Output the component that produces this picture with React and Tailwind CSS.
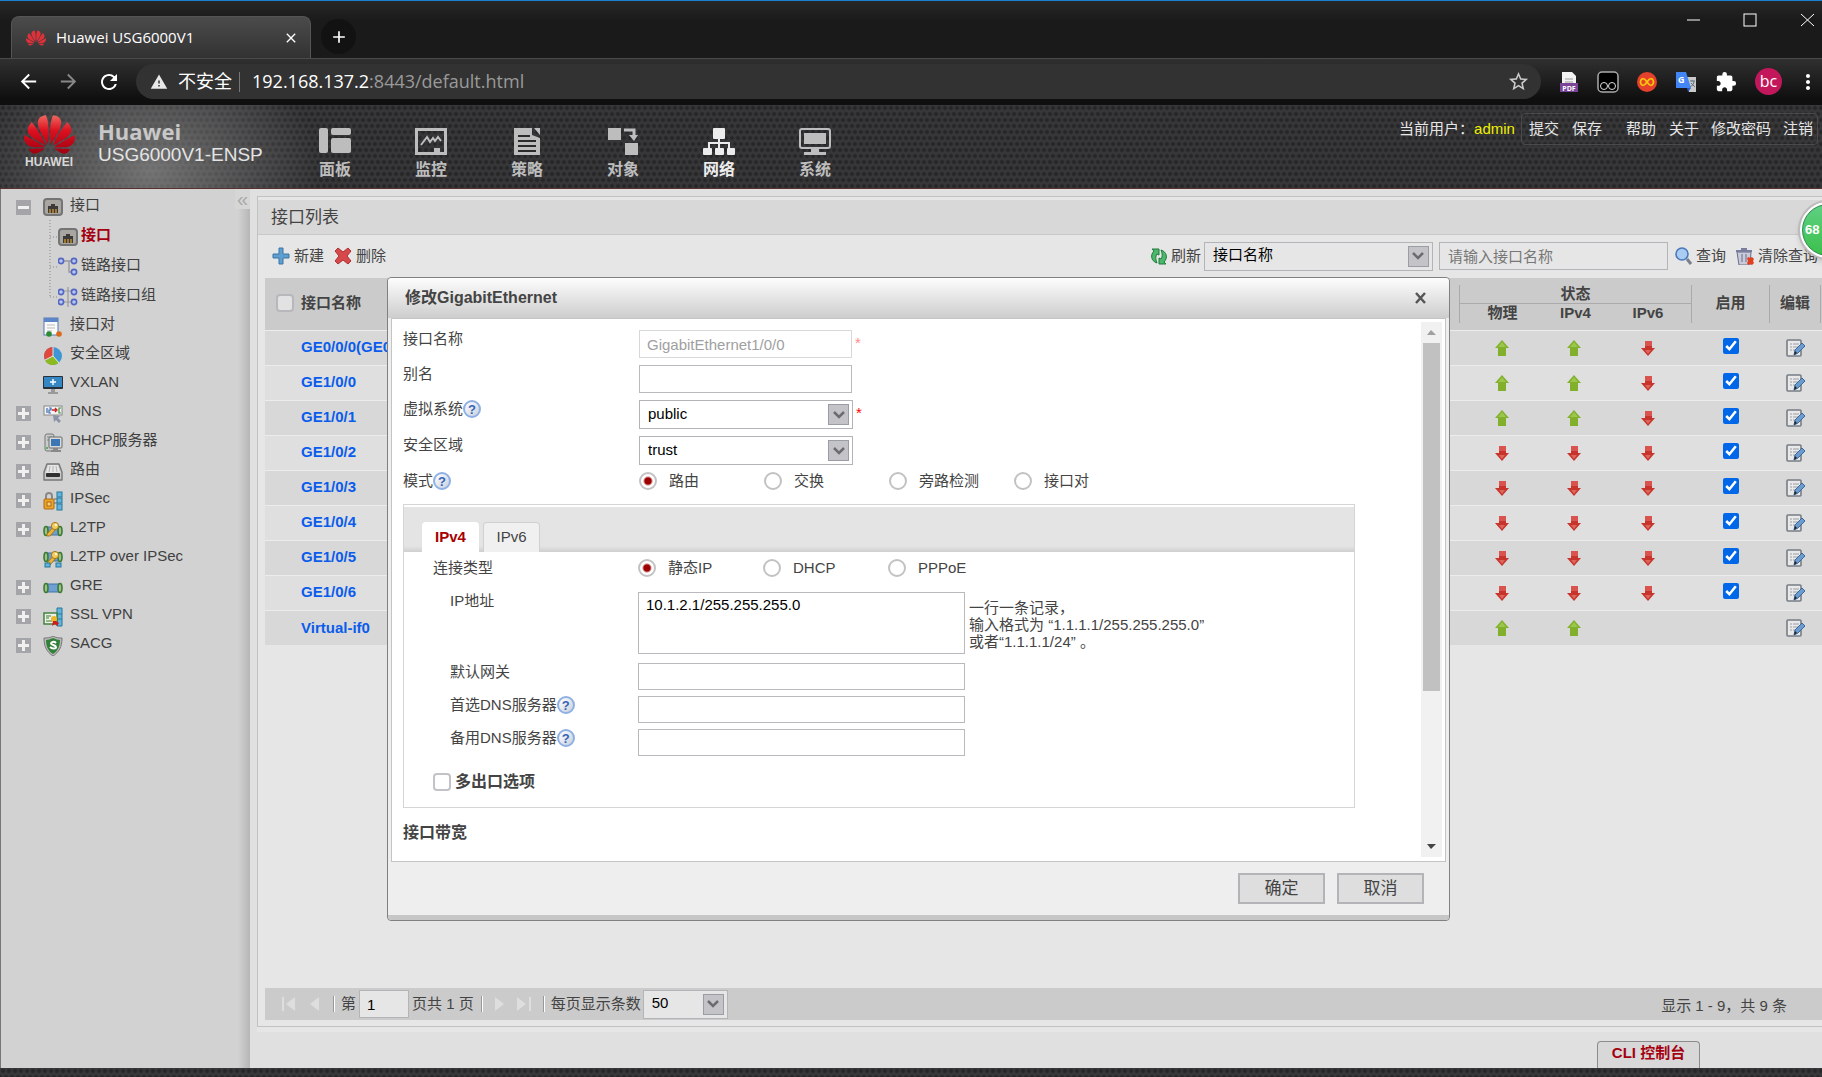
import { useState } from 'react'
import { SiHuawei } from 'react-icons/si'
import { MdArrowBack, MdArrowForward, MdRefresh, MdWarning, MdStarBorder, MdExtension, MdMoreVert, MdAdd, MdClose } from 'react-icons/md'

const NAV = [
  { label: '面板', icon: 'panel' },
  { label: '监控', icon: 'monitor' },
  { label: '策略', icon: 'policy' },
  { label: '对象', icon: 'object' },
  { label: '网络', icon: 'network', active: true },
  { label: '系统', icon: 'system' },
]

const SUB_MENU = [
  { label: '接口', icon: 'port', active: true },
  { label: '链路接口', icon: 'link' },
  { label: '链路接口组', icon: 'linkGroup' },
]

const MENU = [
  { label: '接口对', icon: 'pair' },
  { label: '安全区域', icon: 'zone' },
  { label: 'VXLAN', icon: 'vxlan' },
  { label: 'DNS', icon: 'dns', expandable: true },
  { label: 'DHCP服务器', icon: 'dhcp', expandable: true },
  { label: '路由', icon: 'route', expandable: true },
  { label: 'IPSec', icon: 'ipsec', expandable: true },
  { label: 'L2TP', icon: 'l2tp', expandable: true },
  { label: 'L2TP over IPSec', icon: 'l2tpIpsec' },
  { label: 'GRE', icon: 'gre', expandable: true },
  { label: 'SSL VPN', icon: 'ssl', expandable: true },
  { label: 'SACG', icon: 'sacg', expandable: true },
]

const ROWS = [
  { name: 'GE0/0/0(GE0/METH)', status: ['up', 'up', 'down'], enabled: true },
  { name: 'GE1/0/0', status: ['up', 'up', 'down'], enabled: true },
  { name: 'GE1/0/1', status: ['up', 'up', 'down'], enabled: true },
  { name: 'GE1/0/2', status: ['down', 'down', 'down'], enabled: true },
  { name: 'GE1/0/3', status: ['down', 'down', 'down'], enabled: true },
  { name: 'GE1/0/4', status: ['down', 'down', 'down'], enabled: true },
  { name: 'GE1/0/5', status: ['down', 'down', 'down'], enabled: true },
  { name: 'GE1/0/6', status: ['down', 'down', 'down'], enabled: true },
  { name: 'Virtual-if0', status: ['up', 'up', null] },
]

const NAV_ART = {
  panel: (
    <>
      <rect x="0" y="0" width="9" height="25" rx="2" />
      <rect x="12" y="0" width="20" height="7" rx="2" />
      <rect x="12" y="10" width="20" height="15" rx="2" />
    </>
  ),
  monitor: (
    <>
      <path d="M0 0h32v27H0zM3 3v21h16v-4h6v4h4V3z" fillRule="evenodd" />
      <path d="M6 17l6-8 3 5 3-4 2 3 3-4 3 4" fill="none" stroke="currentColor" strokeWidth="2" />
    </>
  ),
  policy: (
    <>
      <path d="M3 0h18v7l8 3v17H3z" />
      <path d="M23 0h6v7z" />
      <path d="M7 8h12M7 13h18M7 18h18M7 23h18" stroke="#2b2b2b" strokeWidth="2" />
    </>
  ),
  object: (
    <>
      <rect x="1" y="0" width="13" height="12" />
      <rect x="18" y="15" width="13" height="12" />
      <path d="M17 2h10v6" fill="none" stroke="currentColor" strokeWidth="3" />
      <path d="M22 7h9l-4 6z" />
    </>
  ),
  network: (
    <>
      <rect x="10" y="0" width="12" height="11" rx="1" />
      <path d="M16 10v10M6 21v-6h20v6" fill="none" stroke="currentColor" strokeWidth="2" />
      <rect x="0" y="20" width="9" height="7" rx="1" />
      <rect x="12" y="20" width="9" height="7" rx="1" />
      <rect x="24" y="20" width="8" height="7" rx="1" />
    </>
  ),
  system: (
    <>
      <rect x="1" y="1" width="30" height="19" rx="2" fill="none" stroke="currentColor" strokeWidth="2" />
      <rect x="5" y="5" width="22" height="11" />
      <path d="M12 21h8v3h7v3H5v-3h7z" />
    </>
  ),
}

const portArt = (
  <>
    <rect x="1" y="2" width="18" height="16" rx="3" fill="#a9a5a0" stroke="#747474" strokeWidth="2" />
    <path d="M5 16V9h3V7h4v2h3v7z" fill="#3b3a38" />
    <path d="M7 12v4M10 12v4M13 12v4" stroke="#c8953a" strokeWidth="1.4" />
  </>
)

const dot = (x, y) => <circle cx={x} cy={y} r="2.6" fill="#b9c4f2" stroke="#5468c2" strokeWidth="1.6" />

const tunnelArt = (y) => (
  <>
    <rect x="4" y={y} width="12" height="8" fill="#6f9fd4" stroke="#4272a8" />
    <ellipse cx="3" cy={y + 4} rx="2" ry="4.5" fill="#9bc088" stroke="#3c7a34" strokeWidth="1.6" />
    <ellipse cx="17" cy={y + 4} rx="2" ry="4.5" fill="#9bc088" stroke="#3c7a34" strokeWidth="1.6" />
  </>
)

const keyArt = (
  <>
    <path d="M11 6l-7 8v2h3l6-7" fill="#e8b43c" stroke="#a87818" />
    <circle cx="12" cy="6" r="3.6" fill="#f4cc5c" stroke="#a87818" />
    <circle cx="13" cy="5" r="1.1" fill="#fff" />
  </>
)

const MENU_ART = {
  port: portArt,
  link: (
    <>
      <path d="M5 4h6v11h3M11 4h3" fill="none" stroke="#999" strokeWidth="1.4" />
      {dot(3, 4)}{dot(16, 4)}{dot(16, 15)}
    </>
  ),
  linkGroup: (
    <>
      <path d="M10 0v20M5 4h10M5 15h10" fill="none" stroke="#999" strokeWidth="1.2" />
      {dot(3, 5)}{dot(16, 5)}{dot(3, 15)}{dot(16, 15)}
    </>
  ),
  pair: (
    <>
      <rect x="1" y="1" width="14" height="17" fill="#fafafa" stroke="#5578b4" />
      <rect x="1" y="1" width="14" height="4" fill="#5d86c8" />
      <path d="M4 8h8M4 11h8M4 14h5" stroke="#bbb" />
      <circle cx="6" cy="17" r="2.8" fill="#2a8d32" />
      <circle cx="16" cy="17" r="2.8" fill="#db6a18" />
    </>
  ),
  zone: (
    <>
      <circle cx="10" cy="10" r="9" fill="#3f96d4" />
      <path d="M10 10V1a9 9 0 0 0-8 13z" fill="#e0483c" />
      <path d="M10 10l-8 4.500a9 9 0 0 0 14 2z" fill="#8cb822" />
      <path d="M10 1v9l-8 4M10 10l6 7" fill="none" stroke="#fff" strokeWidth=".8" />
    </>
  ),
  vxlan: (
    <>
      <rect x="0" y="1" width="20" height="13" rx="1" fill="#26313a" />
      <rect x="1" y="2" width="18" height="10" fill="#3587c4" />
      <path d="M10 4v6M7 7h6" stroke="#fff" strokeWidth="1.4" />
      <path d="M8 14h4v3h3v2H5v-2h3z" fill="#999" />
    </>
  ),
  dns: (
    <>
      <rect x="1" y="2" width="18" height="9" fill="#f3f3f3" stroke="#888" />
      <path d="M4 4v5M6 4h2v2H6v3h2" stroke="#3a6ab4" strokeWidth="1.2" fill="none" />
      <path d="M9 6h4M12 4l2 2-2 2" stroke="#c22" strokeWidth="1.4" fill="none" />
      <path d="M18 4h-2v5h2" stroke="#3a9a3a" strokeWidth="1.2" fill="none" />
      <path d="M10 11l7 1-2 2 3 3-2 2-3-3-2 2z" fill="#8c93a6" />
    </>
  ),
  dhcp: (
    <>
      <rect x="2" y="1" width="9" height="17" rx="2" fill="#c9cbcc" stroke="#777" />
      <path d="M4 4h5M4 7h5" stroke="#888" />
      <rect x="6" y="4" width="13" height="11" rx="1" fill="#d8dadb" stroke="#6a6a6a" />
      <rect x="8" y="6" width="9" height="7" fill="#3c76b4" />
      <path d="M10 15h5v2h3v2H8v-2h2z" fill="#888" />
      <circle cx="4" cy="15" r="1" fill="#3a3" />
    </>
  ),
  route: (
    <>
      <path d="M4 2h12l3 8v8H1v-8z" fill="#c9c9c9" stroke="#777" strokeWidth="1.4" strokeLinejoin="round" />
      <path d="M5 3h10l2 8H3z" fill="#e6e6e6" />
      <path d="M7 4l-1 6M10 4v6M13 4l1 6" stroke="#b4b4b4" />
      <rect x="3" y="11" width="14" height="4" rx="1" fill="#303030" />
    </>
  ),
  ipsec: (
    <>
      <path d="M3 9V5a3 3 0 0 1 6 0v4" fill="none" stroke="#888" strokeWidth="2" />
      <rect x="1" y="8" width="10" height="10" rx="1" fill="#eea32c" stroke="#a86c10" />
      <rect x="4" y="11" width="4" height="4" fill="#f8cf7c" stroke="#a86c10" />
      <path d="M11 8h3M11 12h3" stroke="#666" />
      <rect x="14" y="1" width="5" height="5" fill="#62b4dc" stroke="#24789c" />
      <rect x="14" y="7" width="5" height="5" fill="#62b4dc" stroke="#24789c" />
      <rect x="14" y="13" width="5" height="6" fill="#62b4dc" stroke="#24789c" />
    </>
  ),
  l2tp: (
    <>
      {tunnelArt(7)}
      {keyArt}
    </>
  ),
  l2tpIpsec: (
    <>
      {tunnelArt(4)}
      {keyArt}
      <rect x="2" y="14" width="5" height="4" fill="#62b4dc" stroke="#24789c" />
      <rect x="13" y="14" width="5" height="4" fill="#62b4dc" stroke="#24789c" />
    </>
  ),
  gre: tunnelArt(6),
  ssl: (
    <>
      <path d="M14 1h5v18h-5zM14 7h5M14 12h5" fill="#62b4dc" stroke="#24789c" />
      <rect x="1" y="6" width="13" height="11" fill="#e9f2e4" stroke="#3d7a3a" strokeWidth="1.4" />
      <path d="M3 9h5M3 11h3M3 14h6" stroke="#3d7a3a" />
      <circle cx="11" cy="12" r="3" fill="#f0b428" />
      <path d="M10 14h3l3 2-2 3-2-2-3 2z" fill="#cc1c1c" />
    </>
  ),
  sacg: (
    <>
      <path d="M10 0c3 2 6 2 9 2 0 9-3 14-9 18C4 16 1 11 1 2c3 0 6 0 9-2z" fill="#b9bbb9" stroke="#777" />
      <path d="M10 2c3 1 5 2 7 2 0 6-2 11-7 14C5 15 3 10 3 4c2 0 4-1 7-2z" fill="#33803a" />
      <path d="M13 7c-2-2-5-1-5 .5S13 9 13 11s-4 2-6 0" fill="none" stroke="#fff" strokeWidth="2" />
    </>
  ),
}

function MenuIcon({ name }) {
  return <svg viewBox="0 0 20 20" className="mt-1 h-5 w-5 shrink-0">{MENU_ART[name]}</svg>
}

function Branch({ last }) {
  return (
    <svg viewBox="0 0 9 30" className="h-[30px] w-[9px] shrink-0" fill="none" stroke="#8a8a8a" strokeDasharray="1 2">
      <path d={last ? 'M1 0v18' : 'M1 0v30'} />
      <path d="M1 17h8" />
    </svg>
  )
}

function Expander({ open }) {
  return (
    <button aria-label={open ? '折叠' : '展开'} className="mt-1 flex h-[15px] w-[15px] shrink-0 items-center justify-center bg-[#a4a5a8]">
      <svg viewBox="0 0 11 11" className="h-[11px] w-[11px]" stroke="#f0f0f0" strokeWidth="3">
        <path d={open ? 'M0 5.500h11' : 'M0 5.500h11M5.500 0v11'} />
      </svg>
    </button>
  )
}

function HelpIcon() {
  return (
    <button
      aria-label="帮助"
      className="flex h-[18px] w-[18px] items-center justify-center rounded-full border-2 border-[#8fb0e4] bg-[linear-gradient(135deg,#ffffff,#c9d0dc)] text-[13px] leading-none font-bold text-[#3565b8]"
    >
      ?
    </button>
  )
}

function Arrow({ dir }) {
  if (dir === 'up') {
    return (
      <svg viewBox="0 0 14 16" className="mx-auto h-4 w-[14px]">
        <path d="M7 0l7 8h-3v8H3V8H0z" fill="#82b02c" />
        <path d="M7 2l4 5H3z" fill="#9cc64c" />
      </svg>
    )
  }
  return (
    <svg viewBox="0 0 14 16" className="mx-auto h-4 w-[14px]">
      <path d="M4 1h7v7h3l-7 8-7-8h4z" fill="#c7342c" />
      <path d="M4 1h7v5H4z" fill="#d9544e" />
      <path d="M4 10h6l-3 4z" fill="#dd665c" />
    </svg>
  )
}

function EditIcon() {
  return (
    <svg viewBox="0 0 20 20" className="mx-auto h-5 w-5">
      <rect x="1" y="2" width="14" height="16" rx="1" fill="#e9e9e9" stroke="#777d86" strokeWidth="1.6" />
      <path d="M4 6h2M4 9h2M4 12h2M7 6h6M7 9h5M7 12h3" stroke="#9a9ea4" />
      <path d="M16 5l3 3-7 7-4 2 1-5z" fill="#6b9cd0" stroke="#3d6798" />
      <path d="M8 17l1-4 2 2z" fill="#222" />
    </svg>
  )
}

function Select({ id, label, value, options, className }) {
  return (
    <div className={`relative flex border border-[#b3b3b8] ${className}`}>
      <select id={id} aria-label={label} defaultValue={value} className="h-full w-full appearance-none bg-transparent pl-2 pb-px text-[15px] text-black outline-none">
        {options.map(o => <option key={o}>{o}</option>)}
      </select>
      <span className="pointer-events-none absolute inset-y-[3px] right-[3px] flex w-[21px] items-center justify-center border border-[#9a9da3] bg-[#c4c4c8]">
        <svg viewBox="0 0 12 8" className="h-2 w-3" fill="none" stroke="#6c6c70" strokeWidth="2.5">
          <path d="M1 1l5 5 5-5" />
        </svg>
      </span>
    </div>
  )
}

function RadioGroup({ name, options }) {
  return (
    <div className="flex">
      {options.map((o, i) => (
        <label key={o} className="flex w-[125px] items-center gap-3">
          <input
            type="radio"
            name={name}
            defaultChecked={i === 0}
            className="h-[18px] w-[18px] appearance-none rounded-full border-2 border-[#c2c2c2] bg-white checked:bg-[radial-gradient(circle,#9d0000_3px,transparent_5px)]"
          />
          {o}
        </label>
      ))}
    </div>
  )
}

function Browser() {
  return (
    <div className="border-t border-[#1a80d2] bg-[#1c1c1c] font-['Open_Sans','Noto_Sans_CJK_SC',sans-serif] text-white">
      <div className="flex h-[57px] items-end bg-[linear-gradient(#272727,#1a1a1a_20px)] pl-[11px]">
        <div className="flex h-[42px] w-[300px] items-center rounded-t-lg border-x border-t border-[#555] bg-[linear-gradient(#4b4b4b,#323232)] pr-[11px] pl-[14px]">
          <SiHuawei className="h-5 w-5 text-[#e0303a]" />
          <span className="ml-[10px] flex-1 text-[15px]">Huawei USG6000V1</span>
          <button aria-label="关闭标签页"><MdClose className="h-4 w-4" /></button>
        </div>
        <button aria-label="新标签页" className="mb-1 ml-[10px] flex h-[35px] w-[35px] items-center justify-center rounded-full bg-[#121212]">
          <MdAdd className="h-5 w-5" />
        </button>
        <div className="ml-auto flex items-center gap-[42px] self-start pt-[10px] pr-[7px]">
          <button aria-label="最小化" className="h-4 w-[15px]"><svg viewBox="0 0 15 16" stroke="#fff"><path d="M1 9h13" /></svg></button>
          <button aria-label="最大化" className="h-4 w-[15px]"><svg viewBox="0 0 15 16" stroke="#fff" fill="none"><rect x="1" y="3" width="12" height="12" /></svg></button>
          <button aria-label="关闭" className="h-4 w-[15px]"><svg viewBox="0 0 15 16" stroke="#fff"><path d="M1 3l13 12M14 3L1 15" /></svg></button>
        </div>
      </div>
      <div className="flex h-[47px] items-center border-t border-[#4a4a4a] bg-[linear-gradient(#303030,#0f0f0f_40px)] pb-px pl-[17px]">
        <button aria-label="后退"><MdArrowBack className="h-[23px] w-[23px]" /></button>
        <button aria-label="前进" className="ml-[17px] text-[#888]"><MdArrowForward className="h-[23px] w-[23px]" /></button>
        <button aria-label="刷新" className="ml-[17px]"><MdRefresh className="h-6 w-6" /></button>
        <div className="ml-[15px] flex h-[35px] flex-1 items-center rounded-full bg-[#323232] pr-[11px] pl-[14px]">
          <MdWarning className="h-[18px] w-[18px] text-[#e8e8e8]" />
          <span className="ml-[10px] text-[18px]">不安全</span>
          <span className="mr-[12px] ml-[7px] h-5 w-px bg-[#777]" />
          <span className="text-[18px]">192.168.137.2<span className="text-[#9a9a9a]">:8443/default.html</span></span>
          <button aria-label="收藏" className="ml-auto"><MdStarBorder className="h-[23px] w-[23px] text-[#ccc]" /></button>
        </div>
        <div className="flex items-center gap-[18px] pr-[6px] pl-[18px]">
          <svg viewBox="0 0 20 22" className="h-[22px] w-5">
            <path d="M3 1h10l4 4v14H3z" fill="#f2f2f2" />
            <path d="M6 8h8M6 11h8" stroke="#999" />
            <rect x="1" y="12" width="18" height="9" fill="#7a4499" />
            <text x="10" y="20" textAnchor="middle" fontSize="7" fontWeight="700" fill="#fff">PDF</text>
          </svg>
          <svg viewBox="0 0 22 22" className="h-[22px] w-[22px]" fill="none">
            <rect x="1" y="1" width="20" height="20" rx="4" fill="#000" stroke="#aaa" strokeWidth="1.5" />
            <circle cx="7" cy="15" r="3.500" stroke="#ddd" />
            <circle cx="15" cy="15" r="3.500" stroke="#ddd" />
          </svg>
          <svg viewBox="0 0 20 20" className="h-5 w-5" fill="none">
            <circle cx="10" cy="10" r="10" fill="#e5402c" />
            <path d="M10 10c-2-3-3-4-5-3s-2 5 0 6 3 0 5-3 3-4 5-3 2 5 0 6-3 0-5-3z" stroke="#f7c80a" strokeWidth="1.8" />
          </svg>
          <svg viewBox="0 0 22 22" className="h-[22px] w-[22px]">
            <path d="M10 6h11v15h-7z" fill="#c9c9c9" />
            <path d="M1 1h10l5 16H1z" fill="#4285f4" />
            <path d="M12 17h4l-3 4z" fill="#2a56c6" />
            <path d="M15 10h5M17 9v1M19 10c0 3-2 5-4 6M16 12l4 4" stroke="#607080" fill="none" />
            <text x="3" y="12" fontSize="9" fontWeight="700" fill="#fff">G</text>
          </svg>
          <button aria-label="扩展程序"><MdExtension className="h-[22px] w-[22px]" /></button>
          <button className="h-[27px] w-[27px] rounded-full bg-[#c2185b] pb-px text-[16px] leading-[25px]">bc</button>
          <button aria-label="更多"><MdMoreVert className="-mx-1 h-6 w-6" /></button>
        </div>
      </div>
    </div>
  )
}

const DOTS = 'bg-[#38383a] bg-[radial-gradient(circle_at_3px_3px,#262627_1px,transparent_3px),radial-gradient(circle_at_0px_9px,#262627_1px,transparent_3px),radial-gradient(circle_at_6px_9px,#262627_1px,transparent_3px)] bg-size-[6px_12px]'

function Header() {
  return (
    <header className={`border-b border-[#5a3030] ${DOTS}`}>
      <div className="flex h-[83px] bg-[radial-gradient(ellipse_170px_130px_at_150px_65px,rgba(150,150,150,0.65),transparent)] pl-[23px]">
        <svg className="h-0 w-0">
          <defs>
            <linearGradient id="petal" x1="0" y1="0" x2="0" y2="1">
              <stop offset="0" stopColor="#f0665e" />
              <stop offset=".4" stopColor="#dc1020" />
              <stop offset="1" stopColor="#a00010" />
            </linearGradient>
          </defs>
        </svg>
        <div className="flex w-[52px] flex-col items-center pt-2">
          <SiHuawei className="h-[43px] w-[51px]" preserveAspectRatio="xMidYMid slice" fill="url(#petal)" />
          <span className="text-[12px] leading-3 font-bold text-[#d8d8d8]">HUAWEI</span>
        </div>
        <div className="ml-[23px] w-[164px] pt-[14px] text-[#e4e4e4]">
          <div className="font-['Open_Sans',sans-serif] text-[22px] leading-6 font-bold text-[#c8c8c8]">Huawei</div>
          <div className="text-[19px] leading-6 whitespace-nowrap">USG6000V1-ENSP</div>
        </div>
        <nav className="ml-[25px] flex pt-[23px]">
          {NAV.map(n => (
            <a key={n.label} href="#" className={`flex w-24 flex-col items-center text-[16px] leading-5 font-bold ${n.active ? 'text-[#ececec]' : 'text-[#bdbdbd]'}`}>
              <svg viewBox="0 0 32 27" className="mb-[5px] h-[27px] w-8" fill="currentColor">{NAV_ART[n.icon]}</svg>
              {n.label}
            </a>
          ))}
        </nav>
        <div className="mt-2 mr-1 ml-auto flex h-8 items-center text-[15px] text-[#e6e6e6]">
          <span>当前用户：</span>
          <span className="text-[#f0f000]">admin</span>
          <div className="ml-[6px] flex h-8 items-center rounded-sm border border-[#4a4a4a] px-1 pl-[7px]">
            <a href="#">提交</a>
            <a href="#" className="ml-[13px]">保存</a>
            <a href="#" className="ml-[24px]">帮助</a>
            <a href="#" className="ml-[13px]">关于</a>
            <a href="#" className="ml-[12px]">修改密码</a>
            <a href="#" className="ml-[12px]">注销</a>
          </div>
        </div>
      </div>
    </header>
  )
}

function Sidebar() {
  return (
    <aside className="flex w-[250px] shrink-0 items-start border-l border-[#777] bg-[linear-gradient(to_left,#b6b6b6,#d2d2d2_12px)] text-[15px] text-[#404040]">
      <ul className="flex-1 pl-[15px] pt-px">
        <li>
          <div className="flex h-[30px] items-center">
            <Expander open />
            <span className="ml-3 flex"><MenuIcon name="port" /></span>
            <a href="#" className="ml-[7px]">接口</a>
          </div>
          <ul className="pl-[33px]">
            {SUB_MENU.map((s, i) => (
              <li key={s.label} className="flex h-[30px] items-center">
                <Branch last={i === SUB_MENU.length - 1} />
                <MenuIcon name={s.icon} />
                <a href="#" className={s.active ? 'ml-[3px] font-bold text-[#a50010]' : 'ml-[3px]'}>{s.label}</a>
              </li>
            ))}
          </ul>
        </li>
        {MENU.map(m => (
          <li key={m.label} className={m.expandable ? 'flex h-[29px] items-center' : 'flex h-[29px] items-center pl-[15px]'}>
            {m.expandable && <Expander />}
            <span className="ml-3 flex"><MenuIcon name={m.icon} /></span>
            <a href="#" className="ml-[7px]">{m.label}</a>
          </li>
        ))}
      </ul>
      <button aria-label="收起" className="h-5 w-[15px] bg-[#d6d6d6] text-[20px] leading-4 text-[#aaa]">«</button>
    </aside>
  )
}

function Toolbar() {
  return (
    <div className="flex h-[43px] items-center overflow-hidden pr-1 pb-px pl-[14px] text-[15px] whitespace-nowrap text-[#444]">
      <button className="flex items-center gap-1">
        <svg viewBox="0 0 18 18" className="h-[18px] w-[18px]"><path d="M7 1h4v6h6v4h-6v6H7v-6H1V7h6z" fill="#5f9fd0" stroke="#3c74a4" /></svg>
        新建
      </button>
      <button className="ml-[10px] flex items-center gap-1">
        <svg viewBox="0 0 18 18" className="h-[18px] w-[18px]"><path d="M4 1l5 4 5-4 3 3-4 5 4 5-3 3-5-4-5 4-3-3 4-5-4-5z" fill="#d6484a" stroke="#b03034" /></svg>
        删除
      </button>
      <button className="ml-auto flex items-center gap-[3px]">
        <svg viewBox="0 0 18 18" className="h-[18px] w-[18px]">
          <path d="M2 2h7v6L7 7c-2 3-1 6 0 9-6-2-7-8-3-12z" fill="#4cb86c" stroke="#1f7a3c" />
          <path d="M16 17H9v-6l2 1c2-3 1-6 0-9 6 2 7 8 3 12z" fill="#4cb86c" stroke="#1f7a3c" />
        </svg>
        刷新
      </button>
      <Select label="查询字段" value="接口名称" options={['接口名称']} className="ml-[3px] h-[29px] w-[229px]" />
      <input aria-label="接口名称" placeholder="请输入接口名称" className="ml-[6px] h-[28px] w-[229px] border border-[#b3b3b8] px-2 outline-none placeholder:text-[#777]" />
      <button className="ml-[7px] flex items-center gap-[3px]">
        <svg viewBox="0 0 18 18" className="h-[18px] w-[18px]" fill="none">
          <path d="M12 12l4 5" stroke="#7a7f8a" strokeWidth="3" />
          <circle cx="7" cy="7" r="6" fill="#a9ccf2" stroke="#4b78bc" strokeWidth="1.600" />
        </svg>
        查询
      </button>
      <button className="ml-[9px] flex items-center gap-[3px]">
        <svg viewBox="0 0 20 18" className="h-[18px] w-5">
          <path d="M2 5h14l-1 13H4z" fill="#c9cbd8" stroke="#6a6c8c" />
          <path d="M1 3h16v2H1zM6 1h6v2H6z" fill="#7b7d9c" />
          <path d="M7 7v8M11 7v8" stroke="#6a6c8c" />
          <path d="M12 11l2-1 1 1 2-1 2 2-1 2 1 2-2 2-2-1-2 1-1-2 1-2z" fill="#e2401c" />
        </svg>
        清除查询
      </button>
    </div>
  )
}

function InterfaceTable() {
  return (
    <table className="ml-[7px] w-[calc(100%-7px)] table-fixed border-collapse text-[15px] text-[#444]">
      <colgroup>
        <col className="w-[124px]" />
        <col />
        <col className="w-[80px]" />
        <col className="w-[73px]" />
        <col className="w-[80px]" />
        <col className="w-[78px]" />
        <col className="w-[52px]" />
      </colgroup>
      <thead className="bg-[#cbcbcb] leading-[18px] font-bold">
        <tr className="h-[26px]">
          <th rowSpan={2} className="p-0 pb-[2px] text-left align-middle">
            <label className="flex items-center gap-[7px] pl-[11px]">
              <input type="checkbox" className="h-[18px] w-[18px] appearance-none rounded-sm border-2 border-[#b8b8bc] bg-[#e2e2e2]" />
              接口名称
            </label>
          </th>
          <th rowSpan={2} />
          <th colSpan={3} className="p-0 align-bottom">
            <div className="h-[19px] border-x border-b border-[#aaa]">状态</div>
          </th>
          <th rowSpan={2} className="p-0"><div className="h-[38px] border-r border-[#aaa] leading-[36px]">启用</div></th>
          <th rowSpan={2} className="p-0"><div className="mr-px h-[38px] border-r border-[#aaa] leading-[36px]">编辑</div></th>
        </tr>
        <tr className="h-[26px]">
          <th className="p-0 align-top"><div className="h-[19px] border-l border-[#aaa] pl-[6px]">物理</div></th>
          <th className="p-0 align-top">IPv4</th>
          <th className="p-0 align-top"><div className="h-[19px] border-r border-[#aaa] pr-[7px]">IPv6</div></th>
        </tr>
      </thead>
      <tbody>
        {ROWS.map(r => (
          <tr key={r.name} className="h-[35px] border-t border-[#ececec] odd:bg-[#d8d8d8] even:bg-[#dfdfdf]">
            <td className="overflow-hidden p-0 pl-[36px] font-bold whitespace-nowrap"><a href="#" className="text-[#0a5cec]">{r.name}</a></td>
            <td />
            <td className="p-0 pl-[6px]">{r.status[0] && <Arrow dir={r.status[0]} />}</td>
            <td className="p-0 pr-[3px]">{r.status[1] && <Arrow dir={r.status[1]} />}</td>
            <td className="p-0 pr-[9px]">{r.status[2] && <Arrow dir={r.status[2]} />}</td>
            <td className="p-0">
              {r.enabled && <input type="checkbox" defaultChecked aria-label={`启用 ${r.name}`} className="mx-auto mb-[3px] block h-4 w-4 accent-[#0068e8]" />}
            </td>
            <td className="p-0"><button aria-label={`编辑 ${r.name}`} className="mx-auto block"><EditIcon /></button></td>
          </tr>
        ))}
      </tbody>
    </table>
  )
}

function Pager() {
  const sep = <span className="h-4 w-[2px] border-l border-[#999] bg-white" />
  return (
    <div className="ml-[7px] flex h-8 items-center bg-[#cbcbcb] pr-[35px] pl-[16px] text-[15px] whitespace-nowrap text-[#444]">
      <button aria-label="首页"><svg viewBox="0 0 16 16" className="h-4 w-4" fill="#dedede"><path d="M1 1h2v14H1zM14 1v14L5 8z" /></svg></button>
      <button aria-label="上一页" className="mr-[13px] ml-[12px]"><svg viewBox="0 0 11 16" className="h-4 w-[11px]" fill="#dedede"><path d="M10 1v14L1 8z" /></svg></button>
      {sep}
      <label htmlFor="page" className="ml-[6px]">第</label>
      <input id="page" defaultValue="1" className="mx-[3px] h-[28px] w-[50px] border border-[#b3b3b8] bg-[#e6e6e6] px-[7px] text-black outline-none" />
      页共 1 页
      <span className="ml-[7px] flex items-center">{sep}</span>
      <button aria-label="下一页" className="ml-[11px]"><svg viewBox="0 0 11 16" className="h-4 w-[11px]" fill="#dedede"><path d="M1 1v14l9-7z" /></svg></button>
      <button aria-label="末页" className="mr-[11px] ml-[11px]"><svg viewBox="0 0 16 16" className="h-4 w-4" fill="#dedede"><path d="M13 1h2v14h-2zM1 1v14l9-7z" /></svg></button>
      {sep}
      <label htmlFor="pageSize" className="mr-[2px] ml-[6px]">每页显示条数</label>
      <Select id="pageSize" value="50" options={['20', '50', '100']} className="h-[29px] w-[85px] bg-[#e6e6e6]" />
      <span className="ml-auto pt-1">显示 1 - 9，共 9 条</span>
    </div>
  )
}

const field = 'border border-[#b9b9be] bg-white px-[7px] text-[15px] text-black outline-none'

function EditDialog({ onClose }) {
  const [tab, setTab] = useState('IPv4')

  return (
    <div role="dialog" aria-label="修改GigabitEthernet" className="absolute top-[277px] right-[372px] left-[387px] rounded border border-[#808080] bg-[#eee] text-[15px] text-[#444]">
      <div className="flex h-[40px] items-center justify-between rounded-t bg-[linear-gradient(#fdfdfd,#cdcdcd)] pr-[21px] pl-[17px]">
        <h2 className="text-[16px] font-bold">修改GigabitEthernet</h2>
        <button aria-label="关闭" onClick={onClose}>
          <svg viewBox="0 0 14 12" className="h-3 w-[14px]" stroke="#555" strokeWidth="2.500"><path d="M2 1l9 10M11 1L2 11" /></svg>
        </button>
      </div>

      <div className="mx-[3px] flex border border-[#c4c4c4] bg-white pt-[3px] pr-[3px] pb-1">
        <div className="flex-1 pt-2 pb-[15px] pl-[11px] leading-[18px]">
          <div className="flex h-[35px] items-start">
            <label htmlFor="ifName" className="w-[236px]">接口名称</label>
            <input id="ifName" disabled defaultValue="GigabitEthernet1/0/0" className="h-[28px] w-[213px] border border-[#d8d8d8] bg-white px-[7px] text-[15px] text-[#a0a0a0]" />
            <span className="pt-1 pl-[3px] text-[#f88]">*</span>
          </div>
          <div className="flex h-[35px] items-start">
            <label htmlFor="alias" className="w-[236px]">别名</label>
            <input id="alias" className={`h-[28px] w-[213px] ${field}`} />
          </div>
          <div className="flex h-9 items-start">
            <div className="flex w-[236px] items-center"><label htmlFor="vsys">虚拟系统</label><HelpIcon /></div>
            <Select id="vsys" value="public" options={['public']} className="h-[29px] w-[214px] bg-white" />
            <span className="pt-1 pl-[3px] text-[#f00]">*</span>
          </div>
          <div className="flex h-9 items-start">
            <label htmlFor="zone" className="w-[236px]">安全区域</label>
            <Select id="zone" value="trust" options={['trust', 'untrust', 'dmz', 'local']} className="h-[29px] w-[214px] bg-white" />
          </div>
          <div className="flex h-8 items-start">
            <div className="flex w-[236px] items-center">模式<HelpIcon /></div>
            <RadioGroup name="mode" options={['路由', '交换', '旁路检测', '接口对']} />
          </div>

          <div className="mr-[66px] border border-[#d5d5d5] pt-[2px] pb-4">
            <div className="flex h-[45px] items-end gap-1 bg-[linear-gradient(#e4e4e4_39px,#cfcfcf)] pl-[18px]">
              {['IPv4', 'IPv6'].map(t => (
                <button
                  key={t}
                  onClick={() => setTab(t)}
                  className={
                    tab === t
                      ? 'h-[30px] w-[57px] rounded-t bg-white pb-px font-bold text-[#a80000]'
                      : 'h-[30px] w-[57px] rounded-t border border-b-0 border-[#d0d0d0] bg-[#f0f0f0] pb-[2px]'
                  }
                >
                  {t}
                </button>
              ))}
            </div>
            <div className="pt-[7px] pl-[29px]">
              <div className="flex h-[33px] items-start">
                <span className="w-[205px]">连接类型</span>
                <RadioGroup name="connType" options={['静态IP', 'DHCP', 'PPPoE']} />
              </div>
              <div className="flex h-[71px] items-start">
                <label htmlFor="ip" className="w-[205px] pl-[17px]">IP地址</label>
                <textarea id="ip" defaultValue="10.1.2.1/255.255.255.0" className={`h-[62px] w-[327px] resize-none pt-[3px] leading-[18px] ${field}`} />
                <p className="pt-[7px] pl-[4px] leading-[17px]">
                  一行一条记录，<br />输入格式为 “1.1.1.1/255.255.255.0”<br />或者“1.1.1.1/24” 。
                </p>
              </div>
              <div className="flex h-[33px] items-start">
                <label htmlFor="gw" className="w-[205px] pl-[17px]">默认网关</label>
                <input id="gw" className={`h-[27px] w-[327px] ${field}`} />
              </div>
              <div className="flex h-[33px] items-start">
                <div className="flex w-[205px] items-center pl-[17px]"><label htmlFor="dns1">首选DNS服务器</label><HelpIcon /></div>
                <input id="dns1" className={`h-[27px] w-[327px] ${field}`} />
              </div>
              <div className="flex h-11 items-start">
                <div className="flex w-[205px] items-center pl-[17px]"><label htmlFor="dns2">备用DNS服务器</label><HelpIcon /></div>
                <input id="dns2" className={`h-[27px] w-[327px] ${field}`} />
              </div>
              <label className="flex items-center gap-1 text-[16px] font-bold">
                <input type="checkbox" className="h-[18px] w-[18px] appearance-none rounded-sm border-2 border-[#c2c2c8] bg-white" />
                多出口选项
              </label>
            </div>
          </div>
          <h3 className="pt-4 text-[16px] font-bold">接口带宽</h3>
        </div>

        <div className="flex w-[21px] flex-col items-center bg-[#f1f1f1] py-[8px]">
          <svg viewBox="0 0 9 5" className="h-[5px] w-[9px]" fill="#a0a0a0"><path d="M0 5l4-5 5 5z" /></svg>
          <div className="mt-[8px] h-[348px] w-[17px] bg-[#c1c1c1]" />
          <svg viewBox="0 0 9 5" className="mt-auto h-[5px] w-[9px]" fill="#444"><path d="M0 0h9L4 5z" /></svg>
        </div>
      </div>

      <div className="flex h-[58px] justify-end gap-3 rounded-b border-b-[5px] border-[#c6c6c6] pt-[11px] pr-[25px] text-[17px]">
        <button className="h-[31px] w-[87px] border-2 border-[#b4b4b8] bg-[#dedede] leading-[25px]">确定</button>
        <button onClick={onClose} className="h-[31px] w-[87px] border-2 border-[#b4b4b8] bg-[#dedede] leading-[25px]">取消</button>
      </div>
    </div>
  )
}

export default function App() {
  const [editing, setEditing] = useState(true)

  return (
    <div className="relative flex min-h-screen flex-col overflow-hidden bg-[#e0e0e0] font-['Liberation_Sans','Noto_Sans_CJK_SC',sans-serif]">
      <Browser />
      <Header />
      <div className="flex flex-1">
        <Sidebar />
        <main className="flex min-w-0 flex-1 flex-col pl-[7px]">
          <section className="mt-[7px] flex flex-1 flex-col border-y border-l border-[#c2c2c2] bg-[#e6e6e6] pt-[3px] pb-[6px]">
            <h1 className="h-[35px] border-b border-[#c8c8c8] bg-[#d8d8d8] pl-[13px] text-[17px] leading-[35px] text-[#444]">接口列表</h1>
            <Toolbar />
            <InterfaceTable />
            <div className="flex-1" />
            <Pager />
          </section>
          <div className="h-[5px] bg-[#e6e6e6]" />
          <footer className="flex h-[36px] items-end justify-end pr-[122px]">
            <button className="h-[27px] w-[103px] rounded-t border border-b-0 border-[#8c8c8c] bg-[#d8d8d8] pb-[3px] text-[15px] font-bold text-[#a50010]">CLI 控制台</button>
          </footer>
        </main>
      </div>
      <div className={`h-[9px] ${DOTS}`} />

      {editing && <EditDialog onClose={() => setEditing(false)} />}

      <div className="absolute top-[200px] -right-9 h-[60px] w-[60px] rounded-full border-2 border-[#bbb] bg-white p-[2px] shadow-md">
        <div className="h-full rounded-full border border-[#2d8a4e] bg-[linear-gradient(#5fd083,#3cc04c)] pl-[2px] text-[13px] leading-[50px] font-bold text-white">68</div>
      </div>
    </div>
  )
}
